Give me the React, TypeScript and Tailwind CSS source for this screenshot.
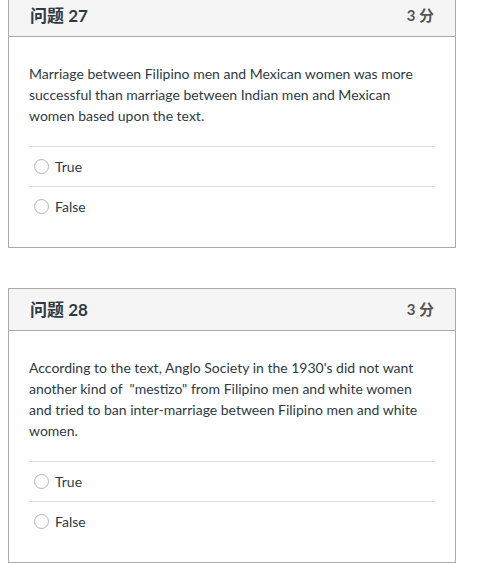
import React from 'react';

type QuestionProps = {
  number: number;
  points: string;
  text: string;
};

const Question: React.FC<QuestionProps> = ({ number, points, text }) => {
  return (
    <div className="w-[448px] border border-[#aaaaaa] bg-white">
      <div className="flex h-[42px] items-center justify-between border-b border-[#aaaaaa] bg-[#f5f5f5] pl-[21px] pr-[21px]">
        <span className="text-[17px] font-bold text-[#2d3b45]">问题 {number}</span>
        <span className="text-[15px] font-bold text-[#555555]">{points}</span>
      </div>
      <div className="px-5 pt-[26px] pb-[21px]">
        <p className="text-[14px] leading-[21px] text-[#2d3b45]">{text}</p>
        <div className="mt-5">
          {['True', 'False'].map((label) => (
            <label
              key={label}
              className="flex h-10 items-center border-t border-[#dddddd] pl-[5px] text-[14px] text-[#2d3b45]"
            >
              <span className="mr-[6px] inline-block h-[15px] w-[15px] rounded-full border border-[#b4b4b4] bg-white" />
              {label}
            </label>
          ))}
        </div>
      </div>
    </div>
  );
};

const App: React.FC = () => {
  return (
    <div
      className="-mt-[6px] flex min-h-[569px] flex-col gap-[40px] bg-white pl-2"
      style={{ fontFamily: 'Lato, "Noto Sans CJK SC", sans-serif' }}
    >
      <Question
        number={27}
        points="3 分"
        text="Marriage between Filipino men and Mexican women was more successful than marriage between Indian men and Mexican women based upon the text."
      />
      <Question
        number={28}
        points="3 分"
        text={'According to the text, Anglo Society in the 1930\'s did not want another kind of \u00a0"mestizo" from Filipino men and white women and tried to ban inter-marriage between Filipino men and white women.'}
      />
    </div>
  );
};

export default App;
